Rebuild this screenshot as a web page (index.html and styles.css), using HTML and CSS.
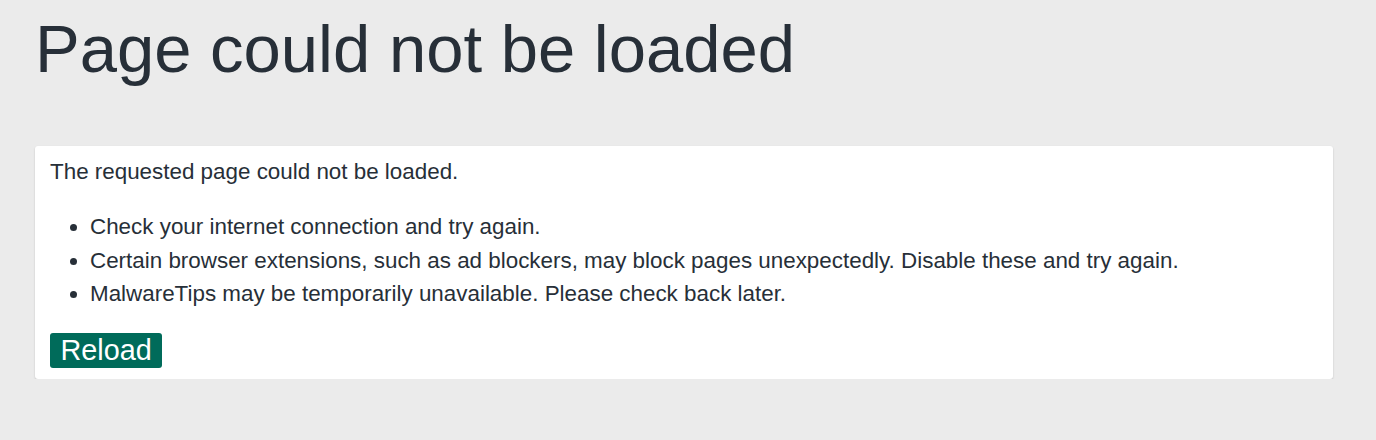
FILE: index.html
```html
<!DOCTYPE html>
<html>
<head>
<meta charset="utf-8">
<link rel="stylesheet" href="styles.css">
</head>
<body>
<div class="page">
  <h1 class="title">Page could not be loaded</h1>
  <div class="card">
    <p class="intro">The requested page could not be loaded.</p>
    <ul class="tips">
      <li>Check your internet connection and try again.</li>
      <li>Certain browser extensions, such as ad blockers, may block pages unexpectedly. Disable these and try again.</li>
      <li>MalwareTips may be temporarily unavailable. Please check back later.</li>
    </ul>
    <button class="reload">Reload</button>
  </div>
</div>
</body>
</html>
```
FILE: styles.css
```css
html, body {
  margin: 0;
  padding: 0;
  background: #ebebeb;
}
body {
  font-family: "Liberation Sans", Arial, sans-serif;
  color: #272f38;
}
.page {
  padding: 0 43px 0 35px;
}
.title {
  margin: 0;
  padding-top: 9px;
  font-size: 67px;
  font-weight: normal;
  line-height: 80px;
  color: #272f38;
}
.card {
  margin-top: 57px;
  background: #fff;
  border-radius: 3px;
  box-shadow: 0 1px 2px rgba(0, 0, 0, 0.18);
  padding: 11px 15px 11px 15px;
  font-size: 22.4px;
  line-height: 30px;
}
.intro {
  margin: 0;
}
.tips {
  margin: 25px 0 24px 0;
  padding-left: 40px;
}
.tips li {
  line-height: 30px;
}
.tips li + li {
  margin-top: 3.5px;
}
.reload {
  display: block;
  font-family: "Liberation Sans", Arial, sans-serif;
  font-size: 28.8px;
  line-height: 35px;
  height: 35px;
  padding: 0 10.5px;
  border: none;
  border-radius: 3px;
  background: #006b5a;
  color: #fff;
}
```
